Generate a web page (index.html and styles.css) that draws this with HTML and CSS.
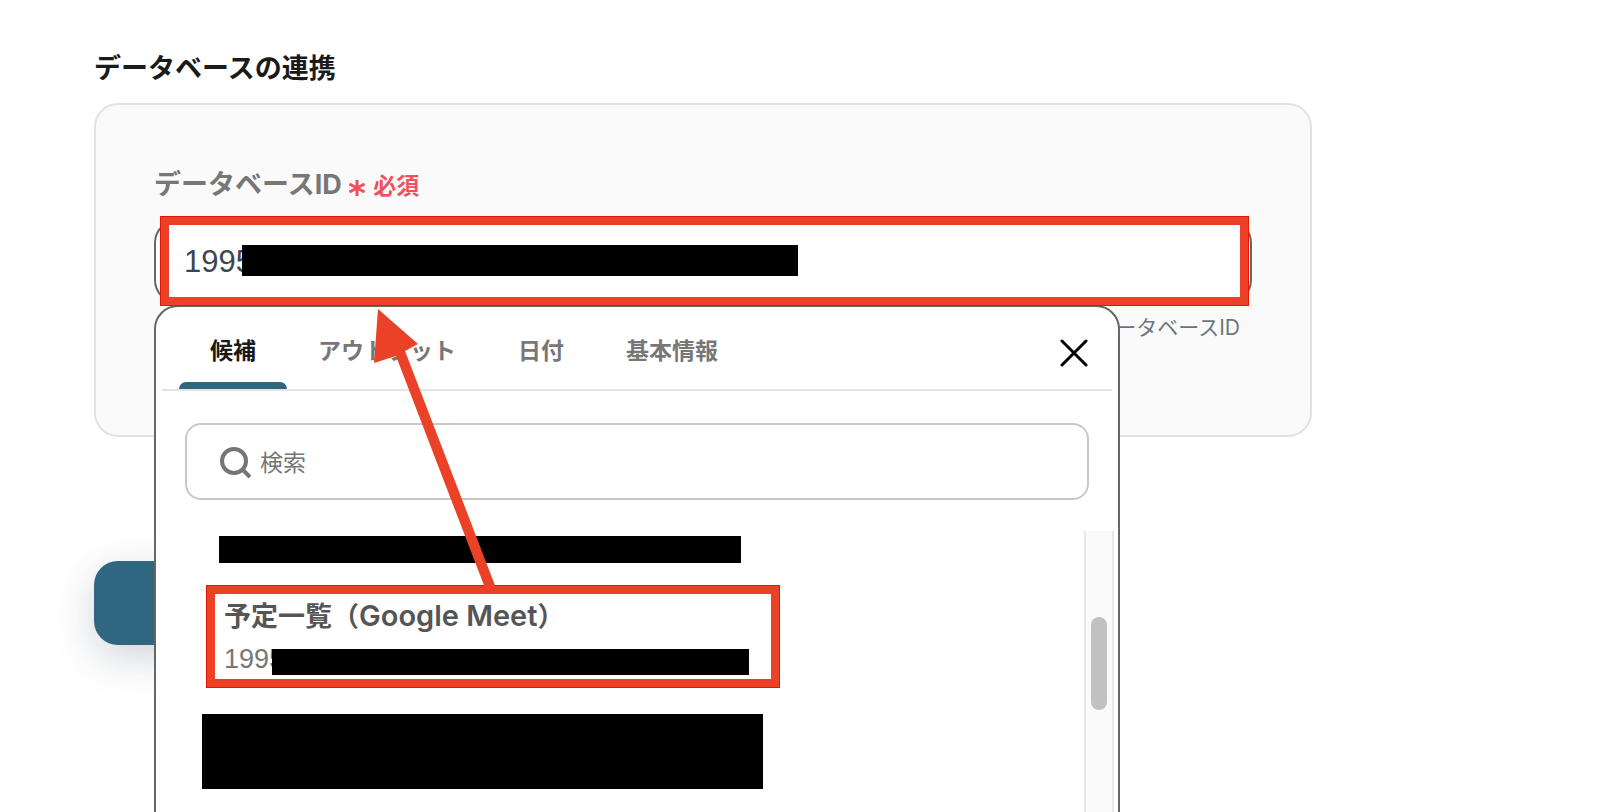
FILE: index.html
```html
<!DOCTYPE html>
<html lang="ja">
<head>
    <meta charset="UTF-8">
    <meta name="viewport" content="width=device-width, initial-scale=1.0">
    <title>データベースの連携</title>
    <link rel="stylesheet" href="styles.css">
</head>
<body>
    <main class="page">
        <h1 class="title">データベースの連携</h1>

        <section class="card">
            <label class="label" for="databaseId">データベースID <span class="required"><svg class="asterisk" viewBox="0 0 18 18" aria-hidden="true"><path d="M9 1v16M1.5 5l15 8M16.5 5l-15 8"/></svg>必須</span></label>
            <div class="field">
                <input class="text-input" type="text" id="databaseId" value="1995">
                <span class="mask mask-input"></span>
                <div class="mark mark-input"></div>

                <div class="dropdown">
                    <div class="tabs">
                        <button type="button" class="tab active">候補</button>
                        <button type="button" class="tab">アウトプット</button>
                        <button type="button" class="tab">日付</button>
                        <button type="button" class="tab">基本情報</button>
                        <button type="button" class="close" aria-label="閉じる">
                            <svg viewBox="0 0 28 28" aria-hidden="true"><path d="M2 2l24 24M26 2L2 26"/></svg>
                        </button>
                    </div>
                    <label class="search">
                        <svg viewBox="0 0 32 32" aria-hidden="true"><circle cx="15" cy="14" r="12"/><path d="M23 22l8 8"/></svg>
                        <input type="search" placeholder="検索" aria-label="検索">
                    </label>
                    <div class="list">
                        <div class="items">
                            <span class="mask mask-first"></span>
                            <div class="item">
                                <div class="item-name">予定一覧（<span class="latin">Google Meet</span>）</div>
                                <div class="item-id">1995<span class="mask mask-id"></span></div>
                                <div class="mark mark-item"></div>
                            </div>
                            <span class="mask mask-last"></span>
                        </div>
                        <div class="scrollbar"><div class="thumb"></div></div>
                    </div>
                    <!-- 候補から入力欄への矢印 -->
                    <svg class="arrow" viewBox="0 0 124 282" aria-hidden="true"><path d="M6 2L46 37L33 44L124 281H113L24 49L2 56Z"/></svg>
                </div>
            </div>
            <p class="help">データベースID</p>
        </section>

        <button type="button" class="submit" aria-label="送信"></button>
    </main>
</body>
</html>
```
FILE: styles.css
```css
* {
    box-sizing: border-box;
}
body {
    margin: 0;
    height: 100vh;
    overflow: hidden;
    background: #fff;
    color: #1a1a1a;
    font-family: Inter, "Noto Sans CJK JP", sans-serif;
}
button, input {
    font-family: inherit;
}
svg {
    fill: none;
    stroke: currentColor;
}
.page {
    height: 100%;
    max-width: 1406px;
    padding: 49px 94px 0;
    overflow: hidden;
}
.title {
    margin: 0 0 14px;
    font-size: 27px;
    line-height: 40px;
    font-weight: 700;
}
.card {
    padding: 60px 58px 93px;
    background: #fafafa;
    border: 2px solid #dfe3e8;
    border-radius: 24px;
}
.label {
    display: block;
    margin-bottom: 13px;
    color: #777;
    font-size: 27px;
    line-height: 40px;
    font-weight: 700;
}
.required {
    color: #f05060;
    font-size: 23px;
}
.asterisk {
    width: 18px;
    height: 18px;
    margin-right: 7px;
    stroke-width: 3;
    vertical-align: -3px;
}

/* 入力欄 */
.field {
    position: relative;
}
.text-input {
    display: block;
    width: 100%;
    height: 85px;
    padding: 0 28px;
    background: #fff;
    border: 2px solid #666;
    border-radius: 24px;
    color: #3c4650;
    font-family: "Liberation Sans", "Noto Sans CJK JP", sans-serif;
    font-size: 31px;
}
.help {
    margin: 10px 12px 0;
    color: #6c757d;
    font-size: 21px;
    line-height: 28px;
    text-align: right;
}
.submit {
    display: block;
    width: 240px;
    height: 84px;
    margin-top: 124px;
    background: #2f6680;
    border: none;
    border-radius: 24px;
    box-shadow: 0 12px 40px rgba(40, 60, 80, 0.22);
}

/* 候補ドロップダウン */
.dropdown {
    position: absolute;
    top: 86px;
    left: 0;
    width: 88%;
    height: 640px;
    background: #fff;
    border: 2px solid #666;
    border-radius: 24px;
}
.tabs {
    display: flex;
    height: 84px;
    margin: 0 6px;
    padding: 0 24px 0 17px;
    border-bottom: 2px solid #e4e4e4;
}
.tab {
    position: relative;
    padding: 2px 31px 0;
    background: none;
    border: none;
    color: #777;
    font-size: 23px;
    font-weight: 700;
    white-space: nowrap;
}
.tab.active {
    color: #1a1a1a;
}
.tab.active::after {
    content: "";
    position: absolute;
    left: 0;
    right: 0;
    bottom: 0;
    height: 7px;
    background: #2f6680;
    border-radius: 7px 7px 0 0;
}
.close {
    width: 28px;
    margin-left: auto;
    padding: 9px 0 0;
    background: none;
    border: none;
    color: #000;
}
.close svg {
    display: block;
    width: 28px;
    height: 28px;
    stroke-width: 3;
    stroke-linecap: round;
}
.search {
    display: flex;
    align-items: center;
    gap: 9px;
    height: 77px;
    margin: 32px 29px 31px;
    padding: 2px 32px 0;
    border: 2px solid #c8c8c8;
    border-radius: 16px;
    color: #757575;
}
.search svg {
    width: 32px;
    height: 32px;
    stroke-width: 4;
}
.search input {
    flex: 1;
    min-width: 0;
    padding: 0;
    border: none;
    outline: none;
    font-size: 23px;
}
.search input::placeholder {
    color: #757575;
}
.list {
    display: flex;
    margin: 0 4px 0 6px;
}
.items {
    flex: 1;
    min-width: 0;
    padding: 5px 40px 0;
}
.item {
    position: relative;
    margin: 22px 0 26px 4px;
    padding: 11px 18px;
    width: 574px;
}
.item-name {
    color: #555;
    font-size: 27px;
    line-height: 40px;
    font-weight: 700;
}
.latin {
    font-size: 29px;
    font-weight: 600;
}
.item-id {
    position: relative;
    margin-top: 4px;
    color: #777;
    font-family: "Liberation Sans", "Noto Sans CJK JP", sans-serif;
    font-size: 27px;
    line-height: 36px;
}
.scrollbar {
    width: 30px;
    height: 400px;
    padding: 86px 5px 0;
    background: #fafafa;
    border: solid #e8e8e8;
    border-width: 0 2px;
}
.thumb {
    height: 93px;
    border-radius: 8px;
    background: #c1c1c1;
}

/* 伏せ字と強調枠 */
.mask {
    display: block;
    background: #000;
}
.mask-input {
    position: absolute;
    top: 26px;
    left: 88px;
    width: 556px;
    height: 31px;
}
.mask-first {
    width: 522px;
    height: 27px;
    margin-left: 17px;
}
.mask-id {
    position: absolute;
    top: 8px;
    left: 48px;
    width: 477px;
    height: 26px;
}
.mask-last {
    width: 561px;
    height: 75px;
}
.mark {
    position: absolute;
    border: 9px solid #eb4126;
    outline: 1px solid #e81505;
    outline-offset: -1px;
}
.mark-input {
    z-index: 1;
    inset: -3px 3px -2px 6px;
}
.mark-item {
    inset: 0;
}
.arrow {
    position: absolute;
    top: 0;
    left: 216px;
    width: 124px;
    height: 282px;
    fill: #eb4126;
    stroke: none;
}
```
